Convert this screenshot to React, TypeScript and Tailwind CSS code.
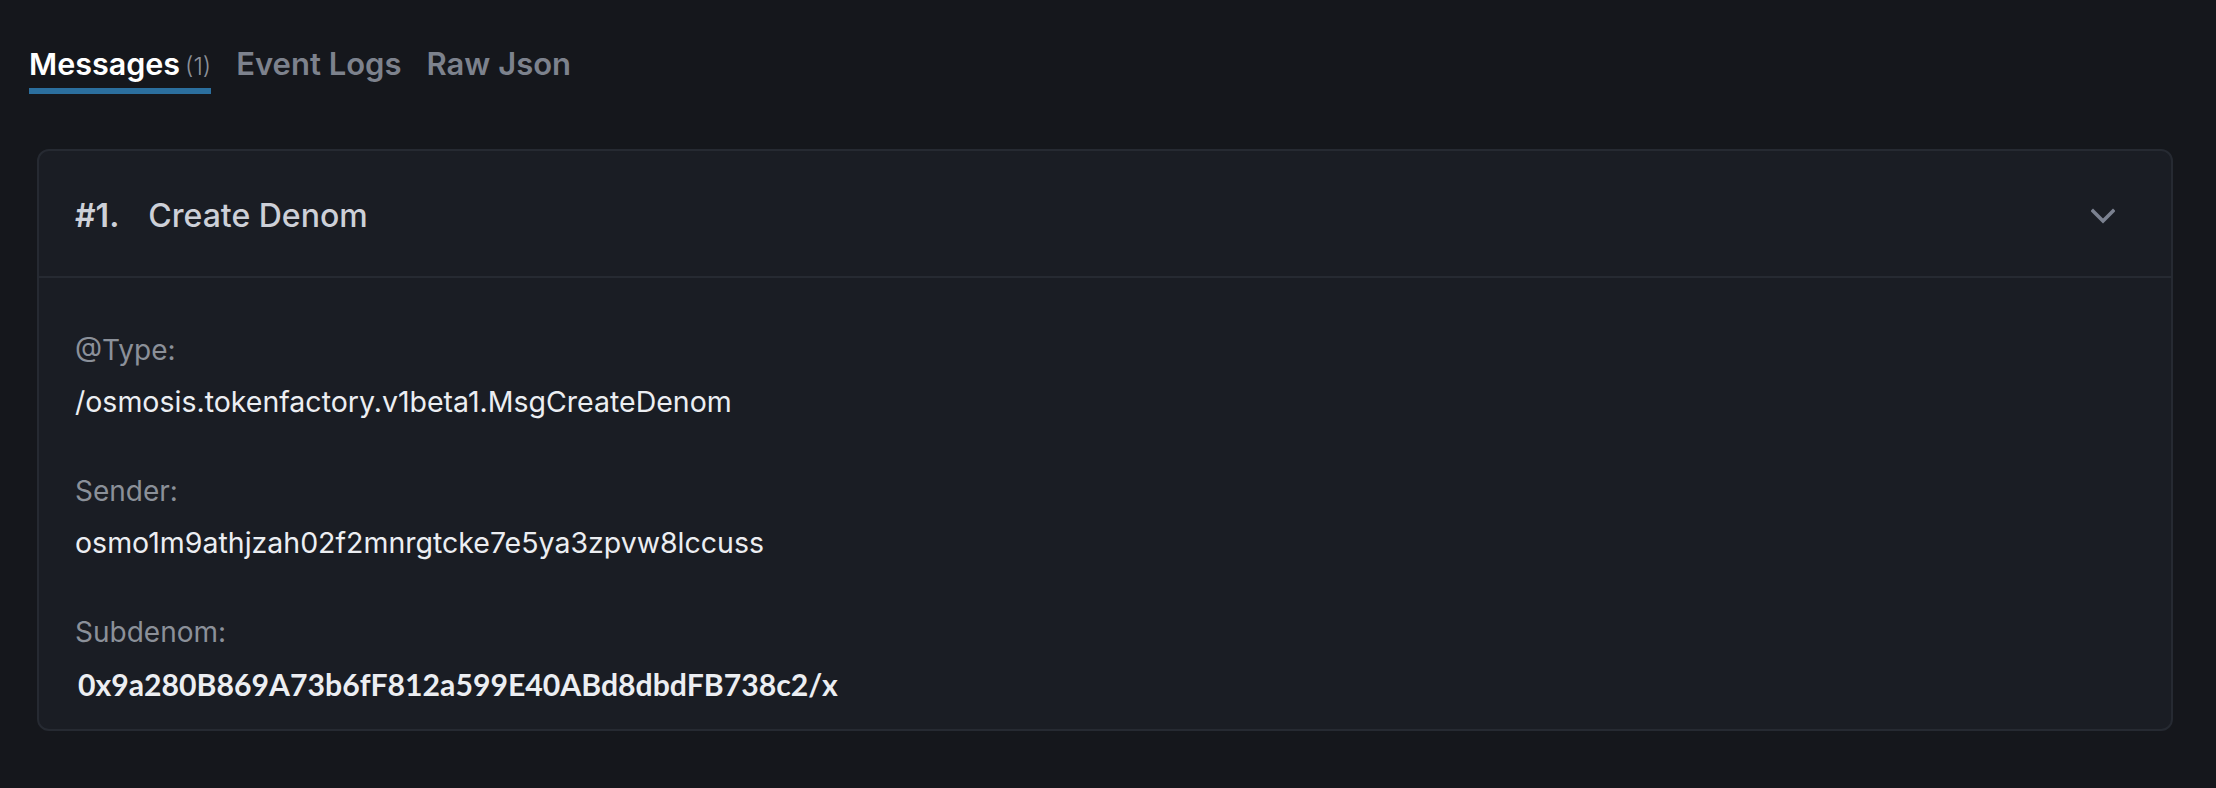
import React from "react";

const font = { fontFamily: "Inter, 'Noto Sans', sans-serif" };

function Field({ label, value, lato }: { label: string; value: string; lato?: boolean }) {
  return (
    <div className="flex flex-col gap-[12px]">
      <div className="text-[28px] leading-[40px] text-[#8b9099]">{label}</div>
      <div
        className={
          lato
            ? "text-[30.2px] leading-[40px] text-[#eceef2] font-bold pl-[3px]"
            : "text-[28.5px] leading-[40px] text-[#eceef2]"
        }
        style={lato ? { fontFamily: "Lato, sans-serif" } : undefined}
      >
        {value}
      </div>
    </div>
  );
}

export default function App() {
  return (
    <div className="w-full min-h-[788px] bg-[#15171c] px-[29px]" style={font}>
      <div className="flex items-start gap-[25px] pt-[44px]">
        <div className="flex flex-col">
          <div className="flex h-[40px] items-baseline gap-[5px] leading-[40px]">
            <span className="text-[30.5px] font-semibold text-white">Messages</span>
            <span className="text-[24px] font-light text-[#8b9099]">(1)</span>
          </div>
          <div className="mt-[4px] h-[6px] bg-[#2b6f9e]" />
        </div>
        <span className="text-[31px] leading-[40px] font-semibold text-[#7d828d]">Event Logs</span>
        <span className="text-[31px] leading-[40px] font-semibold text-[#7d828d]">Raw Json</span>
      </div>

      <div className="mt-[55px] ml-[8px] mr-[14px] rounded-[12px] border-2 border-[#262a32] bg-[#1a1d24]">
        <div className="flex h-[127px] items-center justify-between border-b-2 border-[#262a32] pt-[4px] pl-[36px] pr-[56px]">
          <div className="flex items-center gap-[29px] text-[32px] leading-[40px] text-[#cdd0d8]">
            <span className="font-semibold">#1.</span>
            <span className="font-medium">Create Denom</span>
          </div>
          <svg width="24" height="16" viewBox="0 0 24 16" fill="none">
            <path d="M2 3 L12 13 L22 3" stroke="#7b8190" strokeWidth="3.5" strokeLinecap="square" />
          </svg>
        </div>
        <div className="flex flex-col gap-[49px] pl-[36px] pt-[52px] pb-[25px]">
          <Field label="@Type:" value="/osmosis.tokenfactory.v1beta1.MsgCreateDenom" />
          <Field label="Sender:" value="osmo1m9athjzah02f2mnrgtcke7e5ya3zpvw8lccuss" />
          <Field label="Subdenom:" value="0x9a280B869A73b6fF812a599E40ABd8dbdFB738c2/x" lato />
        </div>
      </div>
    </div>
  );
}
